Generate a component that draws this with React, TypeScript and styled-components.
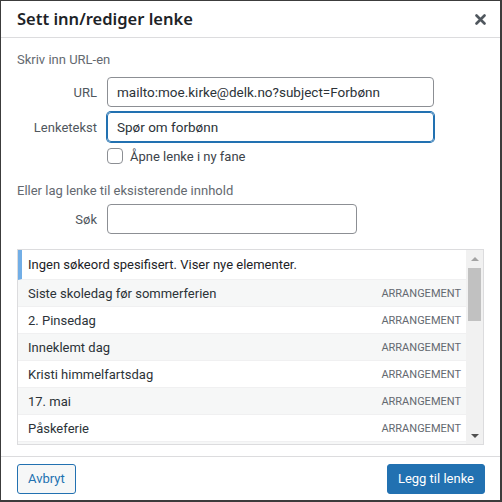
import styled, { createGlobalStyle } from "styled-components";

const GlobalStyle = createGlobalStyle`
  html, body {
    margin: 0;
    padding: 0;
    background: #ffffff;
  }
  body {
    font-family: Roboto, "Noto Sans", sans-serif;
    color: #2c3338;
  }
  * {
    box-sizing: border-box;
  }
`;

const Dialog = styled.div`
  width: 502px;
  height: 502px;
  border: 1px solid #3c3c3c;
  border-bottom-width: 2px;
  border-right-width: 2px;
  background: #ffffff;
  display: flex;
  flex-direction: column;
`;

const Header = styled.div`
  height: 37px;
  flex: none;
  display: flex;
  align-items: center;
  justify-content: space-between;
  padding: 0 13px 0 16px;
  border-bottom: 1px solid #dcdcde;
`;

const Title = styled.h1`
  margin: 0;
  font-family: "Noto Sans", sans-serif;
  font-size: 16.5px;
  font-weight: 600;
  color: #1d2327;
  line-height: 36px;
`;

const CloseButton = styled.button`
  width: 14px;
  height: 14px;
  padding: 0;
  border: 0;
  background: none;
  display: flex;
  align-items: center;
  justify-content: center;
`;

const Body = styled.div`
  flex: none;
  padding: 12px 16px 11px 16px;
  display: flex;
  flex-direction: column;
  border-bottom: 1px solid #dcdcde;
`;

const SectionTitle = styled.p<{ $top: number }>`
  margin: ${(p) => p.$top}px 0 0 0;
  font-size: 13px;
  line-height: 20px;
  color: #646970;
`;

const FieldRow = styled.div<{ $top: number }>`
  display: flex;
  align-items: center;
  margin-top: ${(p) => p.$top}px;
`;

const Label = styled.label`
  width: 90px;
  padding-right: 10px;
  text-align: right;
  font-size: 13px;
  color: #50575e;
`;

const TextInput = styled.div<{ $width: number; $focused?: boolean }>`
  width: ${(p) => p.$width}px;
  height: 30px;
  padding: 0 9px;
  display: flex;
  align-items: center;
  font-size: 13.5px;
  color: #2c3338;
  border: 1px solid ${(p) => (p.$focused ? "#2271b1" : "#8c8f94")};
  box-shadow: ${(p) => (p.$focused ? "0 0 0 1px #2271b1" : "none")};
  border-radius: 4px;
  white-space: nowrap;
  overflow: hidden;
`;

const CheckRow = styled.div`
  display: flex;
  align-items: center;
  gap: 7px;
  margin: 5px 0 0 90px;
  font-size: 13px;
  color: #3c434a;
  height: 18px;
`;

const CheckBox = styled.span`
  width: 16px;
  height: 16px;
  border: 1px solid #8c8f94;
  border-radius: 4px;
  background: #fff;
`;

const Results = styled.div`
  margin-top: 15px;
  height: 196px;
  border: 1px solid #dcdcde;
  display: flex;
  overflow: hidden;
`;

const List = styled.ul`
  flex: 1;
  margin: 0;
  padding: 0;
  list-style: none;
  overflow: hidden;
`;

const Notice = styled.li`
  height: 30px;
  display: flex;
  align-items: center;
  padding-left: 6px;
  border-left: 4px solid #72aee6;
  border-bottom: 1px solid #f0f0f1;
  font-size: 13px;
  color: #1d2327;
`;

const Item = styled.li<{ $alt: boolean }>`
  height: 27px;
  flex: none;
  display: flex;
  align-items: center;
  justify-content: space-between;
  padding: 0 5px 0 10px;
  background: ${(p) => (p.$alt ? "#f6f7f7" : "#ffffff")};
  border-bottom: 1px solid #f0f0f1;
  font-size: 13px;
  color: #2c3338;
`;

const ItemType = styled.span`
  font-size: 11px;
  color: #646970;
  text-transform: uppercase;
`;

const ScrollTrack = styled.div`
  width: 17px;
  flex: none;
  background: #f1f1f1;
  display: flex;
  flex-direction: column;
  align-items: center;
`;

const Arrow = styled.div<{ $down?: boolean }>`
  height: 17px;
  width: 17px;
  flex: none;
  display: flex;
  align-items: center;
  justify-content: center;
  &::after {
    content: "";
    border-left: 4px solid transparent;
    border-right: 4px solid transparent;
    ${(p) =>
      p.$down
        ? "border-top: 4px solid #505050;"
        : "border-bottom: 4px solid #a3a3a3;"}
  }
`;

const Thumb = styled.div`
  width: 13px;
  height: 53px;
  background: #c1c1c1;
  margin-top: 1px;
`;

const Spacer = styled.div`
  flex: 1;
`;

const Footer = styled.div`
  flex: 1;
  padding: 7px 15px 0 16px;
  display: flex;
  justify-content: space-between;
  align-items: flex-start;
`;

const Button = styled.button<{ $primary?: boolean }>`
  height: 30px;
  padding: 0 10px;
  font-family: inherit;
  font-size: 13px;
  line-height: 28px;
  border-radius: 3px;
  border: 1px solid #2271b1;
  background: ${(p) => (p.$primary ? "#2271b1" : "#f6f7f7")};
  color: ${(p) => (p.$primary ? "#ffffff" : "#2271b1")};
`;

const items = [
  "Siste skoledag før sommerferien",
  "2. Pinsedag",
  "Inneklemt dag",
  "Kristi himmelfartsdag",
  "17. mai",
  "Påskeferie",
  "Vinterferie",
];

const App = () => {
  return (
    <>
      <GlobalStyle />
      <Dialog>
        <Header>
          <Title>Sett inn/rediger lenke</Title>
          <CloseButton aria-label="Lukk">
            <svg width="11" height="11" viewBox="0 0 11 11">
              <path
                d="M1.5 1.5 L9.5 9.5 M9.5 1.5 L1.5 9.5"
                stroke="#50575e"
                strokeWidth="2.6"
                strokeLinecap="round"
              />
            </svg>
          </CloseButton>
        </Header>
        <Body>
          <SectionTitle $top={0}>Skriv inn URL-en</SectionTitle>
          <FieldRow $top={7}>
            <Label>URL</Label>
            <TextInput $width={327}>mailto:moe.kirke@delk.no?subject=Forbønn</TextInput>
          </FieldRow>
          <FieldRow $top={5}>
            <Label>Lenketekst</Label>
            <TextInput $width={327} $focused>
              Spør om forbønn
            </TextInput>
          </FieldRow>
          <CheckRow>
            <CheckBox />
            Åpne lenke i ny fane
          </CheckRow>
          <SectionTitle $top={16}>Eller lag lenke til eksisterende innhold</SectionTitle>
          <FieldRow $top={3}>
            <Label>Søk</Label>
            <TextInput $width={250} />
          </FieldRow>
          <Results>
            <List>
              <Notice>Ingen søkeord spesifisert. Viser nye elementer.</Notice>
              {items.map((title, i) => (
                <Item key={title} $alt={i % 2 === 0}>
                  <span>{title}</span>
                  <ItemType>Arrangement</ItemType>
                </Item>
              ))}
            </List>
            <ScrollTrack>
              <Arrow />
              <Thumb />
              <Spacer />
              <Arrow $down />
            </ScrollTrack>
          </Results>
        </Body>
        <Footer>
          <Button>Avbryt</Button>
          <Button $primary>Legg til lenke</Button>
        </Footer>
      </Dialog>
    </>
  );
};

export default App;
